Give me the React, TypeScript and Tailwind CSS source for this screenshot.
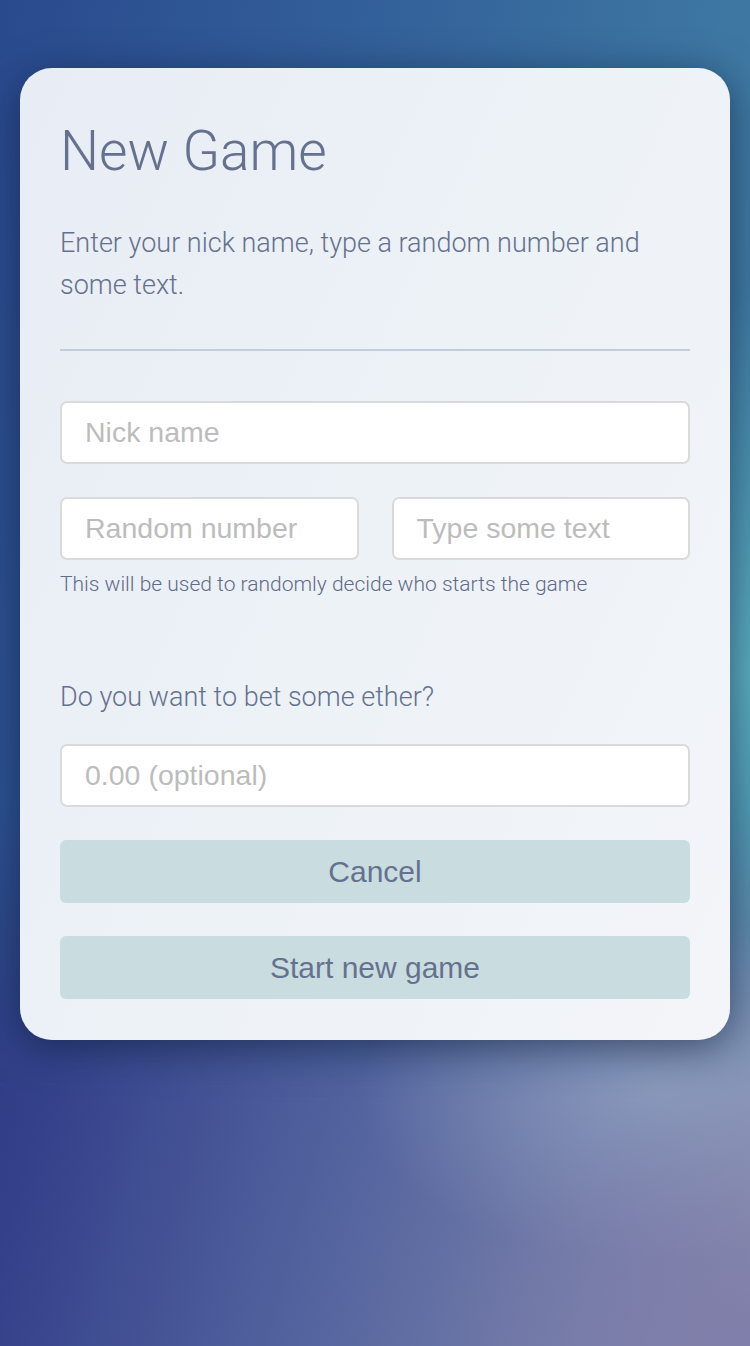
import React from "react";

const inputCls =
  "h-[63px] w-full rounded-[7px] border-2 border-[#dadada] bg-white px-[23px] text-[28.5px] text-[#5f6b88] outline-none placeholder:text-[#bcbcbc] font-['Liberation_Sans',Arial,sans-serif]";

const btnCls =
  "h-[63px] w-full rounded-[6px] bg-[#c9dde0] text-[30px] text-[#66718e] font-['Liberation_Sans',Arial,sans-serif]";

export default function App() {
  return (
    <div className="relative min-h-[1346px] w-full overflow-hidden bg-[#2f4a8c]">
      {/* blurred backdrop */}
      <div className="absolute inset-0 bg-[linear-gradient(100deg,#2a4a8e_0%,#33619a_40%,#4688a8_100%)]" />
      <div className="absolute inset-0 bg-[radial-gradient(ellipse_60%_40%_at_100%_50%,rgba(100,190,200,0.75),transparent_70%)]" />
      <div className="absolute inset-0 bg-[linear-gradient(105deg,#262a6c_0%,#34408a_30%,#52629e_58%,#8a90b0_100%)] [mask-image:linear-gradient(180deg,transparent_0%,transparent_60%,black_82%,black_100%)]" />
      <div className="absolute inset-0 bg-[radial-gradient(ellipse_50%_16%_at_88%_81%,rgba(150,170,200,0.6),transparent_80%)]" />
      <div className="absolute inset-0 bg-[radial-gradient(ellipse_50%_25%_at_100%_100%,rgba(125,120,168,0.75),transparent_85%)]" />

      <div className="relative mx-[20px] mt-[68px] rounded-[32px] bg-[linear-gradient(115deg,#e8edf5_0%,#edf2f7_50%,#f3f5f9_100%)] px-[40px] pb-[41px] pt-[56px] shadow-[0_8px_40px_rgba(10,20,50,0.55)] font-['Roboto','Liberation_Sans',sans-serif]">
        <h1 className="text-[55px] font-light leading-none text-[#65718e]">New Game</h1>
        <p className="mt-[43px] text-[27px] font-light leading-[42px] text-[#65718e]">
          Enter your nick name, type a random number and some text.
        </p>
        <div className="mt-[43px] h-[2px] bg-[#c2ccdc]" />

        <input className={`${inputCls} mt-[50px]`} placeholder="Nick name" />
        <div className="mt-[33px] flex gap-[33px]">
          <input className={inputCls} placeholder="Random number" />
          <input className={inputCls} placeholder="Type some text" />
        </div>
        <p className="mt-[12px] text-[21px] font-light leading-[24px] text-[#5f6b88]">
          This will be used to randomly decide who starts the game
        </p>

        <p className="mt-[86px] text-[27px] font-light leading-[30px] text-[#65718e]">
          Do you want to bet some ether?
        </p>
        <input className={`${inputCls} mt-[32px]`} placeholder="0.00 (optional)" />

        <button className={`${btnCls} mt-[33px]`}>Cancel</button>
        <button className={`${btnCls} mt-[33px]`}>Start new game</button>
      </div>
    </div>
  );
}
